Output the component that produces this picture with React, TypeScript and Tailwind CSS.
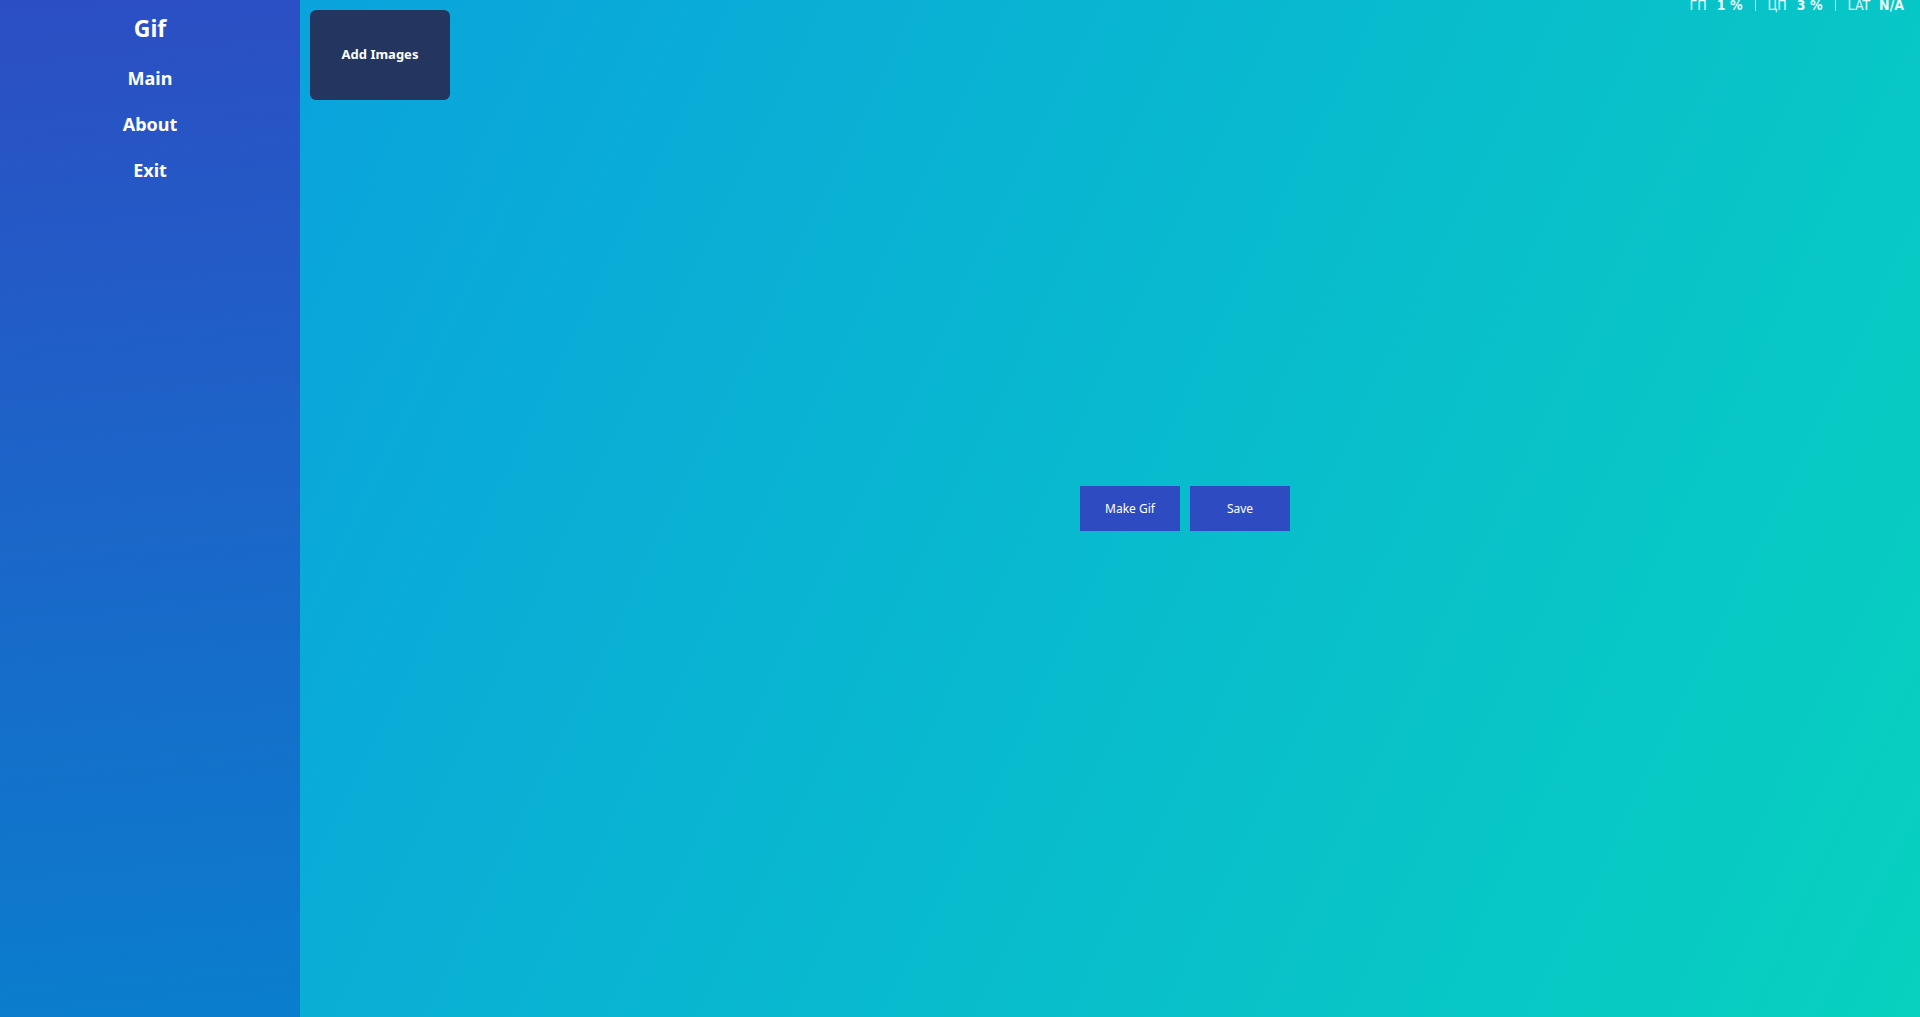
import React from "react";

export default function App() {
  return (
    <div
      className="flex h-[1017px] w-[1920px] overflow-hidden text-white"
      style={{ fontFamily: '"Noto Sans", "Open Sans", sans-serif' }}
    >
      <aside className="flex w-[300px] shrink-0 flex-col items-center bg-[linear-gradient(175deg,#2c4ec4,#0a7ecd)] pt-[11px]">
        <div className="text-[23px] font-bold leading-[34px]">Gif</div>
        <nav className="mt-[20px] flex flex-col items-center gap-[20px] text-[18px] font-bold leading-[26px]">
          <span>Main</span>
          <span>About</span>
          <span>Exit</span>
        </nav>
      </aside>
      <main className="relative flex flex-1 flex-col bg-[linear-gradient(116deg,#0aa3dd,#07d1bf)]">
        <div className="pl-[10px] pt-[10px]">
          <button className="flex h-[90px] w-[140px] items-center justify-center rounded-[6px] bg-[#243560] text-[13px] font-bold text-white">
            Add Images
          </button>
        </div>
        <div className="mt-[386px] flex gap-[10px] pl-[780px]">
          <button className="flex h-[45px] w-[100px] items-center justify-center bg-[#2e4bc2] text-[12px] text-white">
            Make Gif
          </button>
          <button className="flex h-[45px] w-[100px] items-center justify-center bg-[#2e4bc2] text-[12px] text-white">
            Save
          </button>
        </div>
        <div
          className="absolute right-[16px] top-[-4px] flex items-center text-[14px] leading-[18px] text-[#e8fbff]"
          style={{ fontFamily: '"DejaVu Sans Condensed", "Roboto", sans-serif' }}
        >
          <span>ГП</span>
          <span className="ml-[10px] font-bold">1 %</span>
          <span className="mx-[12px] h-[12px] w-px bg-[#e8fbff]" />
          <span>ЦП</span>
          <span className="ml-[10px] font-bold">3 %</span>
          <span className="mx-[12px] h-[12px] w-px bg-[#e8fbff]" />
          <span>LAT</span>
          <span className="ml-[9px] font-bold">N/A</span>
        </div>
      </main>
    </div>
  );
}
